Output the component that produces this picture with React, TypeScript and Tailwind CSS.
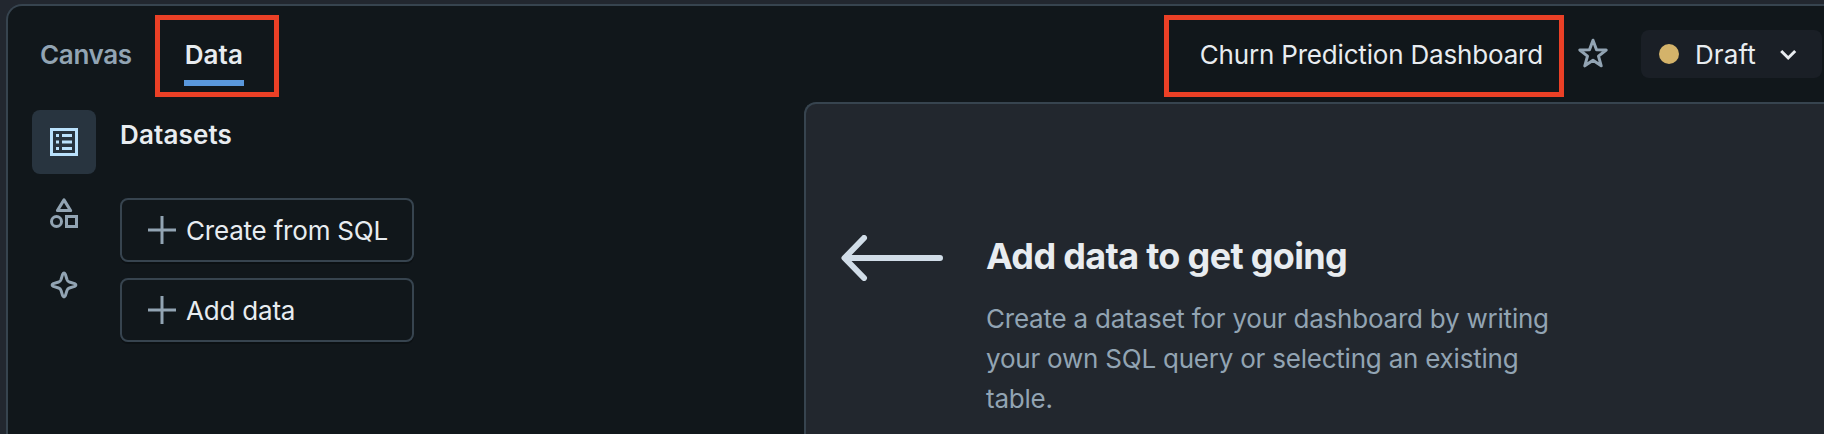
import type { ReactNode } from "react";

function Tab({ label, active = false }: { label: string; active?: boolean }) {
  return (
    <button
      className={
        active
          ? "flex h-[50px] flex-col border-b-[6px] border-[#5a98dc] px-px text-[26px] leading-[38px] font-semibold text-[#e8ecf0]"
          : "flex h-[50px] flex-col border-b-[6px] border-transparent text-[26px] leading-[38px] font-semibold text-[#92a4b3]"
      }
    >
      <span className={active ? "tracking-[0.1px]" : "tracking-[-0.35px]"}>{label}</span>
    </button>
  );
}

function RailButton({ active = false, children }: { active?: boolean; children: ReactNode }) {
  return (
    <button
      className={
        active
          ? "flex size-16 items-center justify-center rounded-lg bg-[#28343f] text-[#bae1fc]"
          : "flex size-16 items-center justify-center rounded-lg text-[#92a4b3]"
      }
    >
      <svg viewBox="0 0 16 16" className="size-8" fill="none" stroke="currentColor" strokeWidth="1.5">
        {children}
      </svg>
    </button>
  );
}

function ActionButton({ label }: { label: string }) {
  return (
    <button className="flex h-16 w-[294px] items-center gap-2 rounded-lg border-2 border-[#37444f] pl-6 text-[26px] text-[#e8ecf0] shadow-[0_2px_0_rgba(0,0,0,0.25)]">
      <svg viewBox="0 0 16 16" className="size-8" fill="none" stroke="#92a4b3" strokeWidth="1.5">
        <path d="M8 1v14M1 8h14" />
      </svg>
      <span className="tracking-[-0.2px]">{label}</span>
    </button>
  );
}

export default function App() {
  return (
    <div className="relative h-[434px] w-full overflow-hidden bg-[#22272f] pt-1 pl-1.5 font-[Inter,'Liberation_Sans',sans-serif]">
      <div className="flex h-[440px] flex-col rounded-tl-2xl border-t-2 border-l-2 border-[#37444f] bg-[#11171b]">
        <header className="flex h-24 shrink-0 items-start justify-between pl-8">
          <nav className="flex gap-[52px] pt-[30px]">
            <Tab label="Canvas" />
            <Tab label="Data" active />
          </nav>
          <div className="flex h-24 items-center pr-0.5">
            <h1 className="text-[26px] tracking-[-0.18px] text-[#e8ecf0]">Churn Prediction Dashboard</h1>
            <svg
              viewBox="0 0 16 16"
              className="mr-8 ml-[34px] size-8"
              fill="none"
              stroke="#92a4b3"
              strokeWidth="1.5"
              strokeLinejoin="round"
            >
              <path d="M8 1.1l1.75 4.75 4.85.15-3.85 3.05 1.35 4.85L8 11.1l-4.1 2.8 1.35-4.85L1.4 6l4.85-.15z" />
            </svg>
            <button className="flex h-12 w-[181px] items-center rounded-lg bg-[#1a1f26] pl-[18px] text-[26px] text-[#e8ecf0]">
              <span className="mr-4 size-5 rounded-full bg-[#d4b36a]" />
              <span className="tracking-[0.1px]">Draft</span>
              <svg viewBox="0 0 16 16" className="ml-4 size-8" fill="none" stroke="currentColor" strokeWidth="1.5">
                <path d="M4.6 6.5L8.1 10l3.5-3.5" />
              </svg>
            </button>
          </div>
        </header>

        <div className="flex min-h-0 flex-1">
          <aside className="flex w-[796px] shrink-0 gap-6 pt-2 pl-6">
            <div className="flex flex-col gap-2">
              <RailButton active>
                <rect x="1.75" y="1.75" width="12.5" height="12.5" />
                <path d="M4 4.75h1.5M4 8h1.5M4 11.25h1.5M7 4.75h5M7 8h5M7 11.25h5" />
              </RailButton>
              <RailButton>
                <path d="M8 .95l3.3 5.35H4.7z" strokeLinejoin="round" />
                <circle cx="4.25" cy="11.75" r="2.5" />
                <rect x="9.25" y="9.25" width="5" height="5" />
              </RailButton>
              <RailButton>
                <path
                  strokeLinejoin="round"
                  d="M7.3 2.2Q8 .9 8.7 2.2L9.5 4.8Q9.8 5.7 10.7 6L13.3 6.8Q14.6 7.5 13.3 8.2L10.7 9Q9.8 9.3 9.5 10.2L8.7 12.8Q8 14.1 7.3 12.8L6.5 10.2Q6.2 9.3 5.3 9L2.7 8.2Q1.4 7.5 2.7 6.8L5.3 6Q6.2 5.7 6.5 4.8Z"
                />
              </RailButton>
            </div>
            <div className="flex flex-col">
              <h2 className="mt-[5px] mb-[43px] h-10 text-[26px] leading-10 font-semibold tracking-[0.15px] text-[#e8ecf0]">
                Datasets
              </h2>
              <div className="flex flex-col gap-4">
                <ActionButton label="Create from SQL" />
                <ActionButton label="Add data" />
              </div>
            </div>
          </aside>

          <main className="flex min-w-0 flex-1 items-start rounded-tl-xl border-t-2 border-l-2 border-[#37444f] bg-[#22272e]">
            <svg
              viewBox="0 0 102 46"
              className="mt-[131px] ml-[35px] h-[46px] w-[102px] shrink-0"
              fill="none"
              stroke="#d1dde8"
              strokeWidth="6"
              strokeLinecap="round"
              strokeLinejoin="round"
            >
              <path d="M99 23H4M23 3L3.5 23L23 43" />
            </svg>
            <section className="mt-[128px] ml-[43px] w-[580px]">
              <h2 className="text-[36px] leading-[48px] font-bold tracking-[-0.68px] text-[#e8ecf0]">
                Add data to get going
              </h2>
              <p className="mt-[19px] text-[26px] leading-10 tracking-[-0.22px] text-[#92a4b3]">
                Create a dataset for your dashboard by writing your own SQL query or selecting an existing table.
              </p>
            </section>
          </main>
        </div>
      </div>

      <div className="absolute top-[15px] left-[155px] h-[82px] w-[124px] border-[5px] border-[#eb4026]" />
      <div className="absolute top-[15px] left-[1164px] h-[82px] w-[400px] border-[5px] border-[#eb4026]" />
    </div>
  );
}
